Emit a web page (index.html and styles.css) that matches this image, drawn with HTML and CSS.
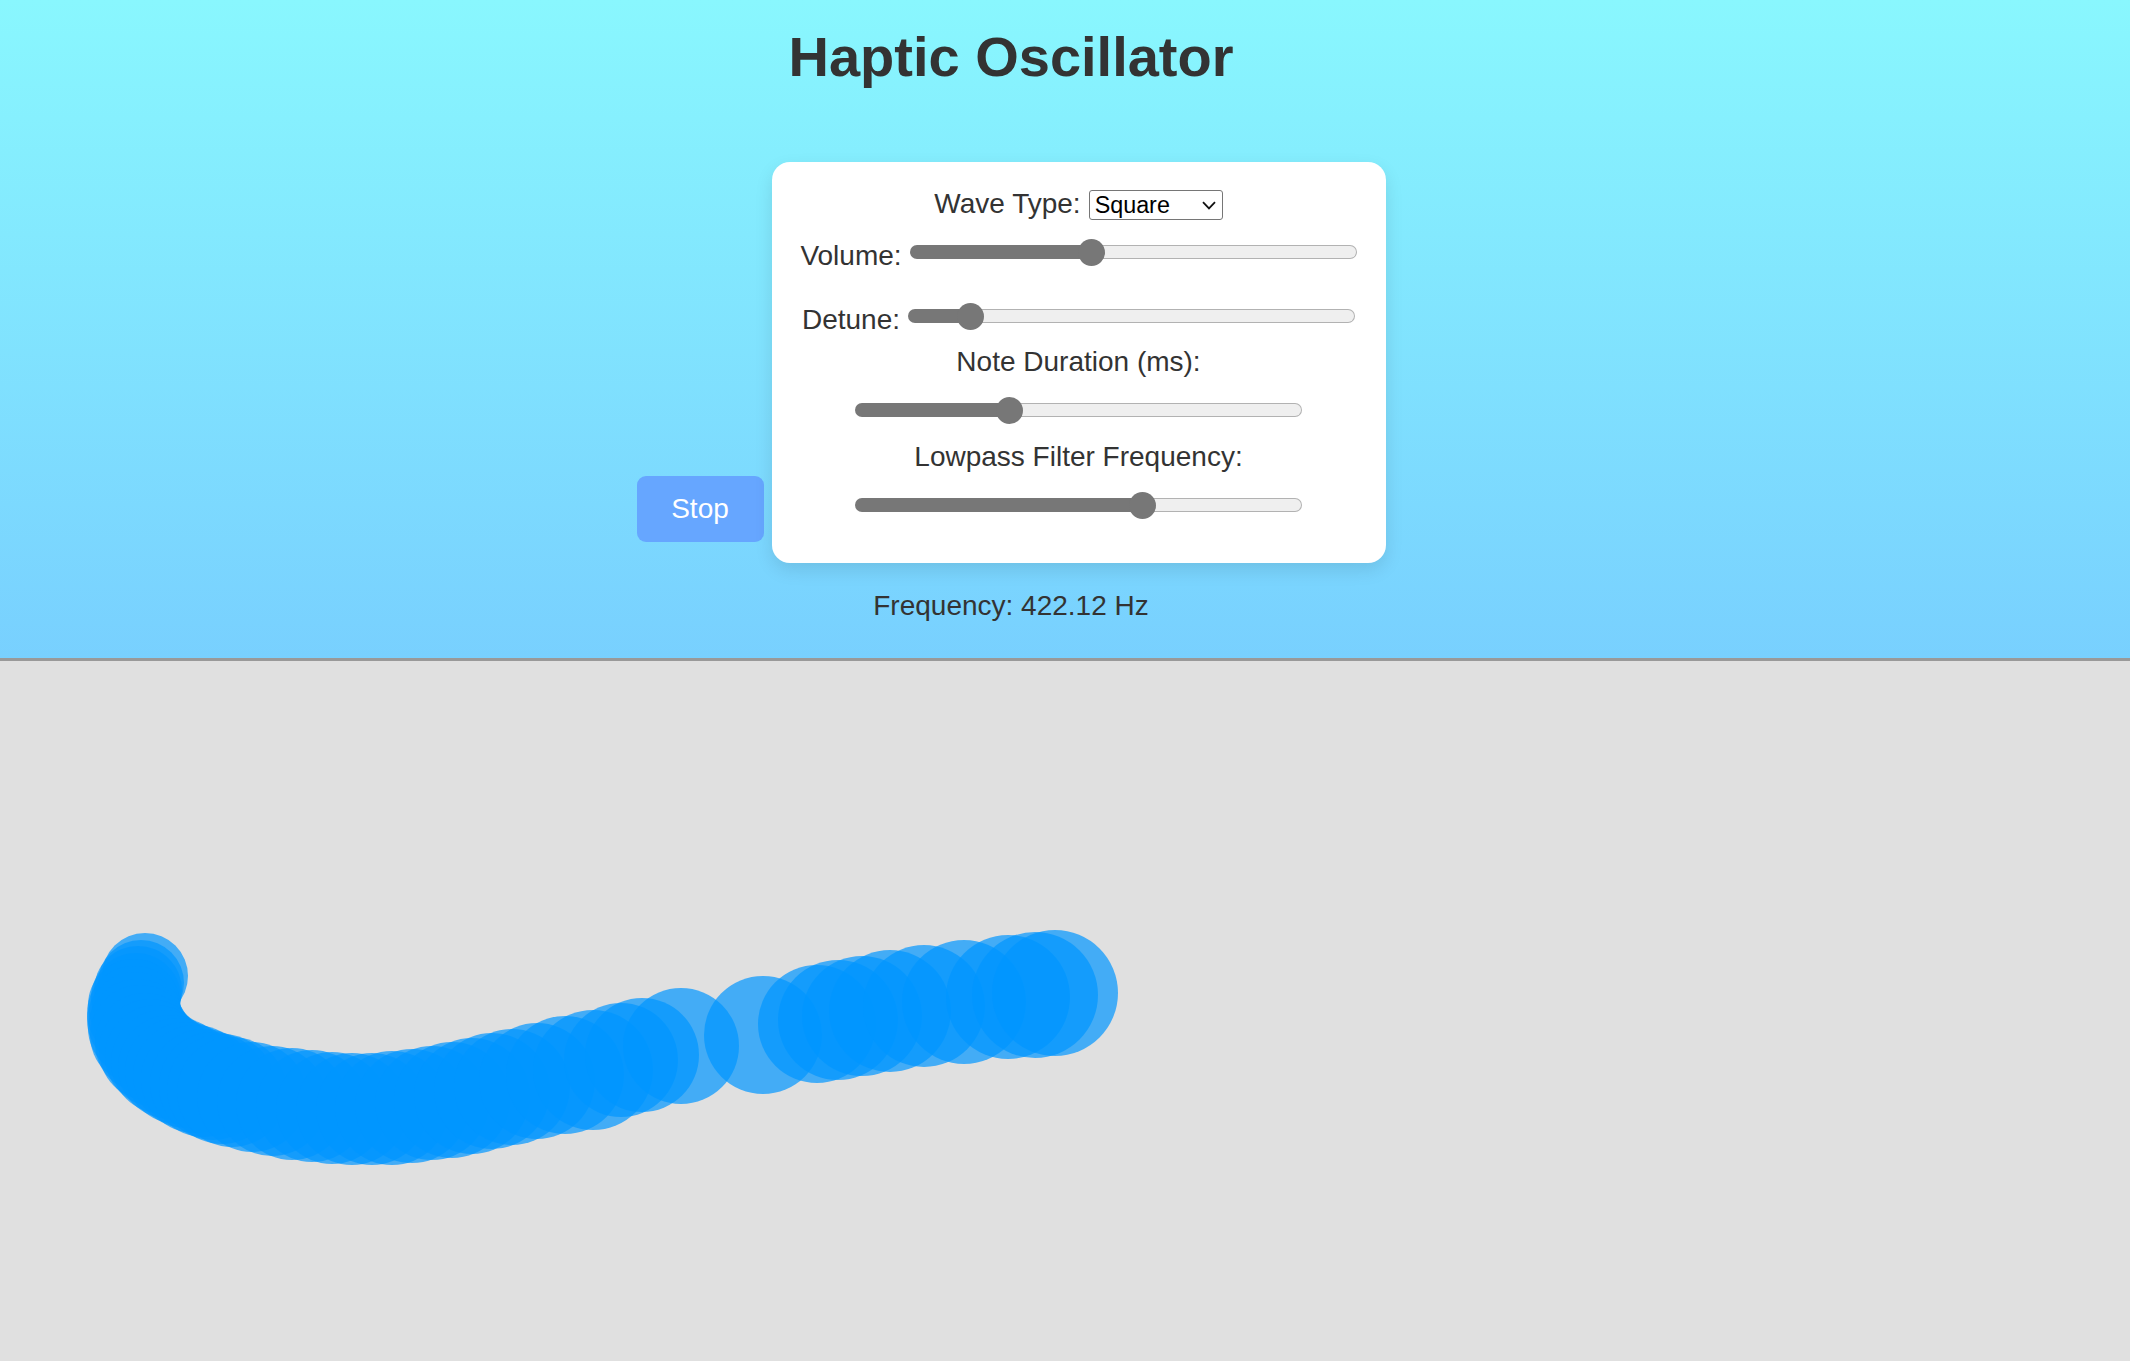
FILE: index.html
```html
<!DOCTYPE html>
<html lang="en">
<head>
<meta charset="utf-8">
<title>Haptic Oscillator</title>
<link rel="stylesheet" href="styles.css">
</head>
<body>
<header class="top">
  <h1 class="title">Haptic Oscillator</h1>
  <div class="panel-row">
    <button class="stop-btn" type="button">Stop</button>
    <div class="card">
      <div class="row row-wave">
        <label class="lbl" for="wave">Wave Type:</label>
        <span class="select-wrap">
          <select id="wave" class="wave-select">
            <option>Sine</option>
            <option selected>Square</option>
            <option>Sawtooth</option>
            <option>Triangle</option>
          </select>
          <svg class="chev" width="14" height="9" viewBox="0 0 14 9" aria-hidden="true"><path d="M1 1.2 L7 7.4 L13 1.2" fill="none" stroke="#111" stroke-width="1.8"/></svg>
        </span>
      </div>
      <div class="row row-inline row-volume">
        <label class="lbl lbl-inline" for="volume">Volume:</label>
        <input id="volume" class="slider" type="range" min="0" max="1000" value="401" style="--fill:182px">
      </div>
      <div class="row row-inline row-detune">
        <label class="lbl lbl-inline" for="detune">Detune:</label>
        <input id="detune" class="slider" type="range" min="0" max="1000" value="115" style="--fill:62px">
      </div>
      <div class="row row-note-label">
        <label class="lbl" for="duration">Note Duration (ms):</label>
      </div>
      <div class="row row-slider">
        <input id="duration" class="slider" type="range" min="0" max="1000" value="334" style="--fill:154px">
      </div>
      <div class="row row-lp-label">
        <label class="lbl" for="lowpass">Lowpass Filter Frequency:</label>
      </div>
      <div class="row row-slider">
        <input id="lowpass" class="slider" type="range" min="0" max="1000" value="654" style="--fill:289px">
      </div>
    </div>
  </div>
  <p class="freq">Frequency: 422.12 Hz</p>
</header>
<main class="pad">
  <svg class="pad-svg" width="2130" height="700" viewBox="0 0 2130 700" aria-hidden="true">
    <g class="trail">
      <circle cx="145" cy="315" r="43"/>
      <circle cx="141" cy="322" r="43"/>
      <circle cx="138" cy="329" r="44"/>
      <circle cx="136" cy="337" r="45"/>
      <circle cx="134" cy="344" r="46"/>
      <circle cx="134" cy="352" r="47"/>
      <circle cx="135" cy="359" r="48"/>
      <circle cx="137" cy="367" r="49"/>
      <circle cx="140" cy="374" r="50"/>
      <circle cx="145" cy="382" r="50"/>
      <circle cx="150" cy="389" r="51"/>
      <circle cx="156" cy="395" r="51"/>
      <circle cx="163" cy="401" r="52"/>
      <circle cx="170" cy="406" r="52"/>
      <circle cx="178" cy="410" r="53"/>
      <circle cx="186" cy="414" r="53"/>
      <circle cx="195" cy="418" r="54"/>
      <circle cx="204" cy="422" r="54"/>
      <circle cx="213" cy="425" r="54"/>
      <circle cx="222" cy="428" r="55"/>
      <circle cx="232" cy="431" r="55"/>
      <circle cx="252" cy="436" r="55"/>
      <circle cx="272" cy="440" r="55"/>
      <circle cx="292" cy="443" r="56"/>
      <circle cx="312" cy="445" r="56"/>
      <circle cx="332" cy="447" r="56"/>
      <circle cx="352" cy="448" r="56"/>
      <circle cx="372" cy="448" r="56"/>
      <circle cx="392" cy="447" r="57"/>
      <circle cx="412" cy="445" r="57"/>
      <circle cx="432" cy="442" r="57"/>
      <circle cx="452" cy="439" r="58"/>
      <circle cx="472" cy="435" r="58"/>
      <circle cx="492" cy="430" r="58"/>
      <circle cx="512" cy="426" r="58"/>
      <circle cx="537" cy="420" r="58"/>
      <circle cx="565" cy="414" r="59"/>
      <circle cx="593" cy="409" r="60"/>
      <circle cx="621" cy="399" r="57"/>
      <circle cx="642" cy="394" r="57"/>
      <circle cx="681" cy="385" r="58"/>
      <circle cx="763" cy="374" r="59"/>
      <circle cx="817" cy="363" r="59"/>
      <circle cx="838" cy="359" r="60"/>
      <circle cx="862" cy="355" r="60"/>
      <circle cx="890" cy="350" r="61"/>
      <circle cx="924" cy="345" r="61"/>
      <circle cx="964" cy="341" r="62"/>
      <circle cx="1008" cy="336" r="62"/>
      <circle cx="1035" cy="334" r="63"/>
      <circle cx="1055" cy="332" r="63"/>
    </g>
  </svg>
</main>
</body>
</html>
```
FILE: styles.css
```css
html, body {
  margin: 0;
  height: 100%;
}

body {
  display: flex;
  flex-direction: column;
  min-height: 1361px;
  background: linear-gradient(to bottom, #89f7fe, #66a6ff);
  font-family: "Liberation Sans", Arial, sans-serif;
  color: #333;
}

.top {
  display: flex;
  flex-direction: column;
  align-items: center;
  width: 2022px;
  padding-bottom: 36px;
}

.title {
  margin: 25px 0 0;
  font-size: 56px;
  line-height: 64px;
  font-weight: bold;
  color: #333;
}

.panel-row {
  display: flex;
  align-items: flex-end;
  gap: 8px;
  margin-top: 73px;
}

.stop-btn {
  width: 127px;
  height: 66px;
  margin-bottom: 21px;
  padding: 0;
  border: none;
  border-radius: 9px;
  background: #66a6ff;
  color: #fff;
  font-family: "Liberation Sans", Arial, sans-serif;
  font-size: 28px;
}

.card {
  width: 614px;
  box-sizing: border-box;
  padding: 28px 28px 44px;
  background: #fff;
  border-radius: 18px;
  box-shadow: 0 7px 18px rgba(0, 0, 0, 0.1);
  display: flex;
  flex-direction: column;
}

.row {
  display: flex;
  justify-content: center;
  gap: 8px;
}

.lbl {
  font-size: 28px;
  line-height: 28px;
  color: #333;
}

.row-wave {
  align-items: baseline;
}

.select-wrap {
  position: relative;
  display: inline-block;
}

.wave-select {
  -webkit-appearance: none;
  appearance: none;
  width: 134px;
  height: 30px;
  box-sizing: border-box;
  margin: 0;
  padding: 0 0 0 5px;
  border: 1px solid #767676;
  border-radius: 3px;
  background: #fff;
  font-family: "Liberation Sans", Arial, sans-serif;
  font-size: 23.33px;
  color: #000;
}

.chev {
  position: absolute;
  right: 7px;
  top: 11px;
  pointer-events: none;
}

.row-inline {
  align-items: flex-start;
}

.lbl-inline {
  margin-top: 4px;
}

.row-volume {
  margin-top: 18px;
}

.row-detune {
  margin-top: 32px;
}

.row-note-label {
  margin-top: 14px;
}

.row-lp-label {
  margin-top: 19px;
}

.row-slider {
  margin-top: 20px;
}

.slider {
  -webkit-appearance: none;
  appearance: none;
  width: 447px;
  height: 28px;
  margin: 0;
  padding: 0;
  background: transparent;
}

.slider::-webkit-slider-runnable-track {
  height: 14px;
  box-sizing: border-box;
  border: 1px solid transparent;
  border-radius: 7px;
  background:
    linear-gradient(to right, #777 var(--fill), transparent var(--fill)) border-box,
    linear-gradient(#efefef, #efefef) padding-box,
    linear-gradient(#b2b2b2, #b2b2b2) border-box;
}

.slider::-webkit-slider-thumb {
  -webkit-appearance: none;
  appearance: none;
  width: 27px;
  height: 27px;
  margin-top: -7.5px;
  border: none;
  border-radius: 50%;
  background: #777;
}

.freq {
  margin: 27px 0 0;
  font-size: 28px;
  line-height: 32px;
  color: #333;
}

.pad {
  flex: 1;
  border-top: 3px solid #999;
  background: #e0e0e0;
  overflow: hidden;
}

.pad-svg {
  display: block;
}

.trail circle {
  fill: rgba(0, 150, 255, 0.7);
}
```
